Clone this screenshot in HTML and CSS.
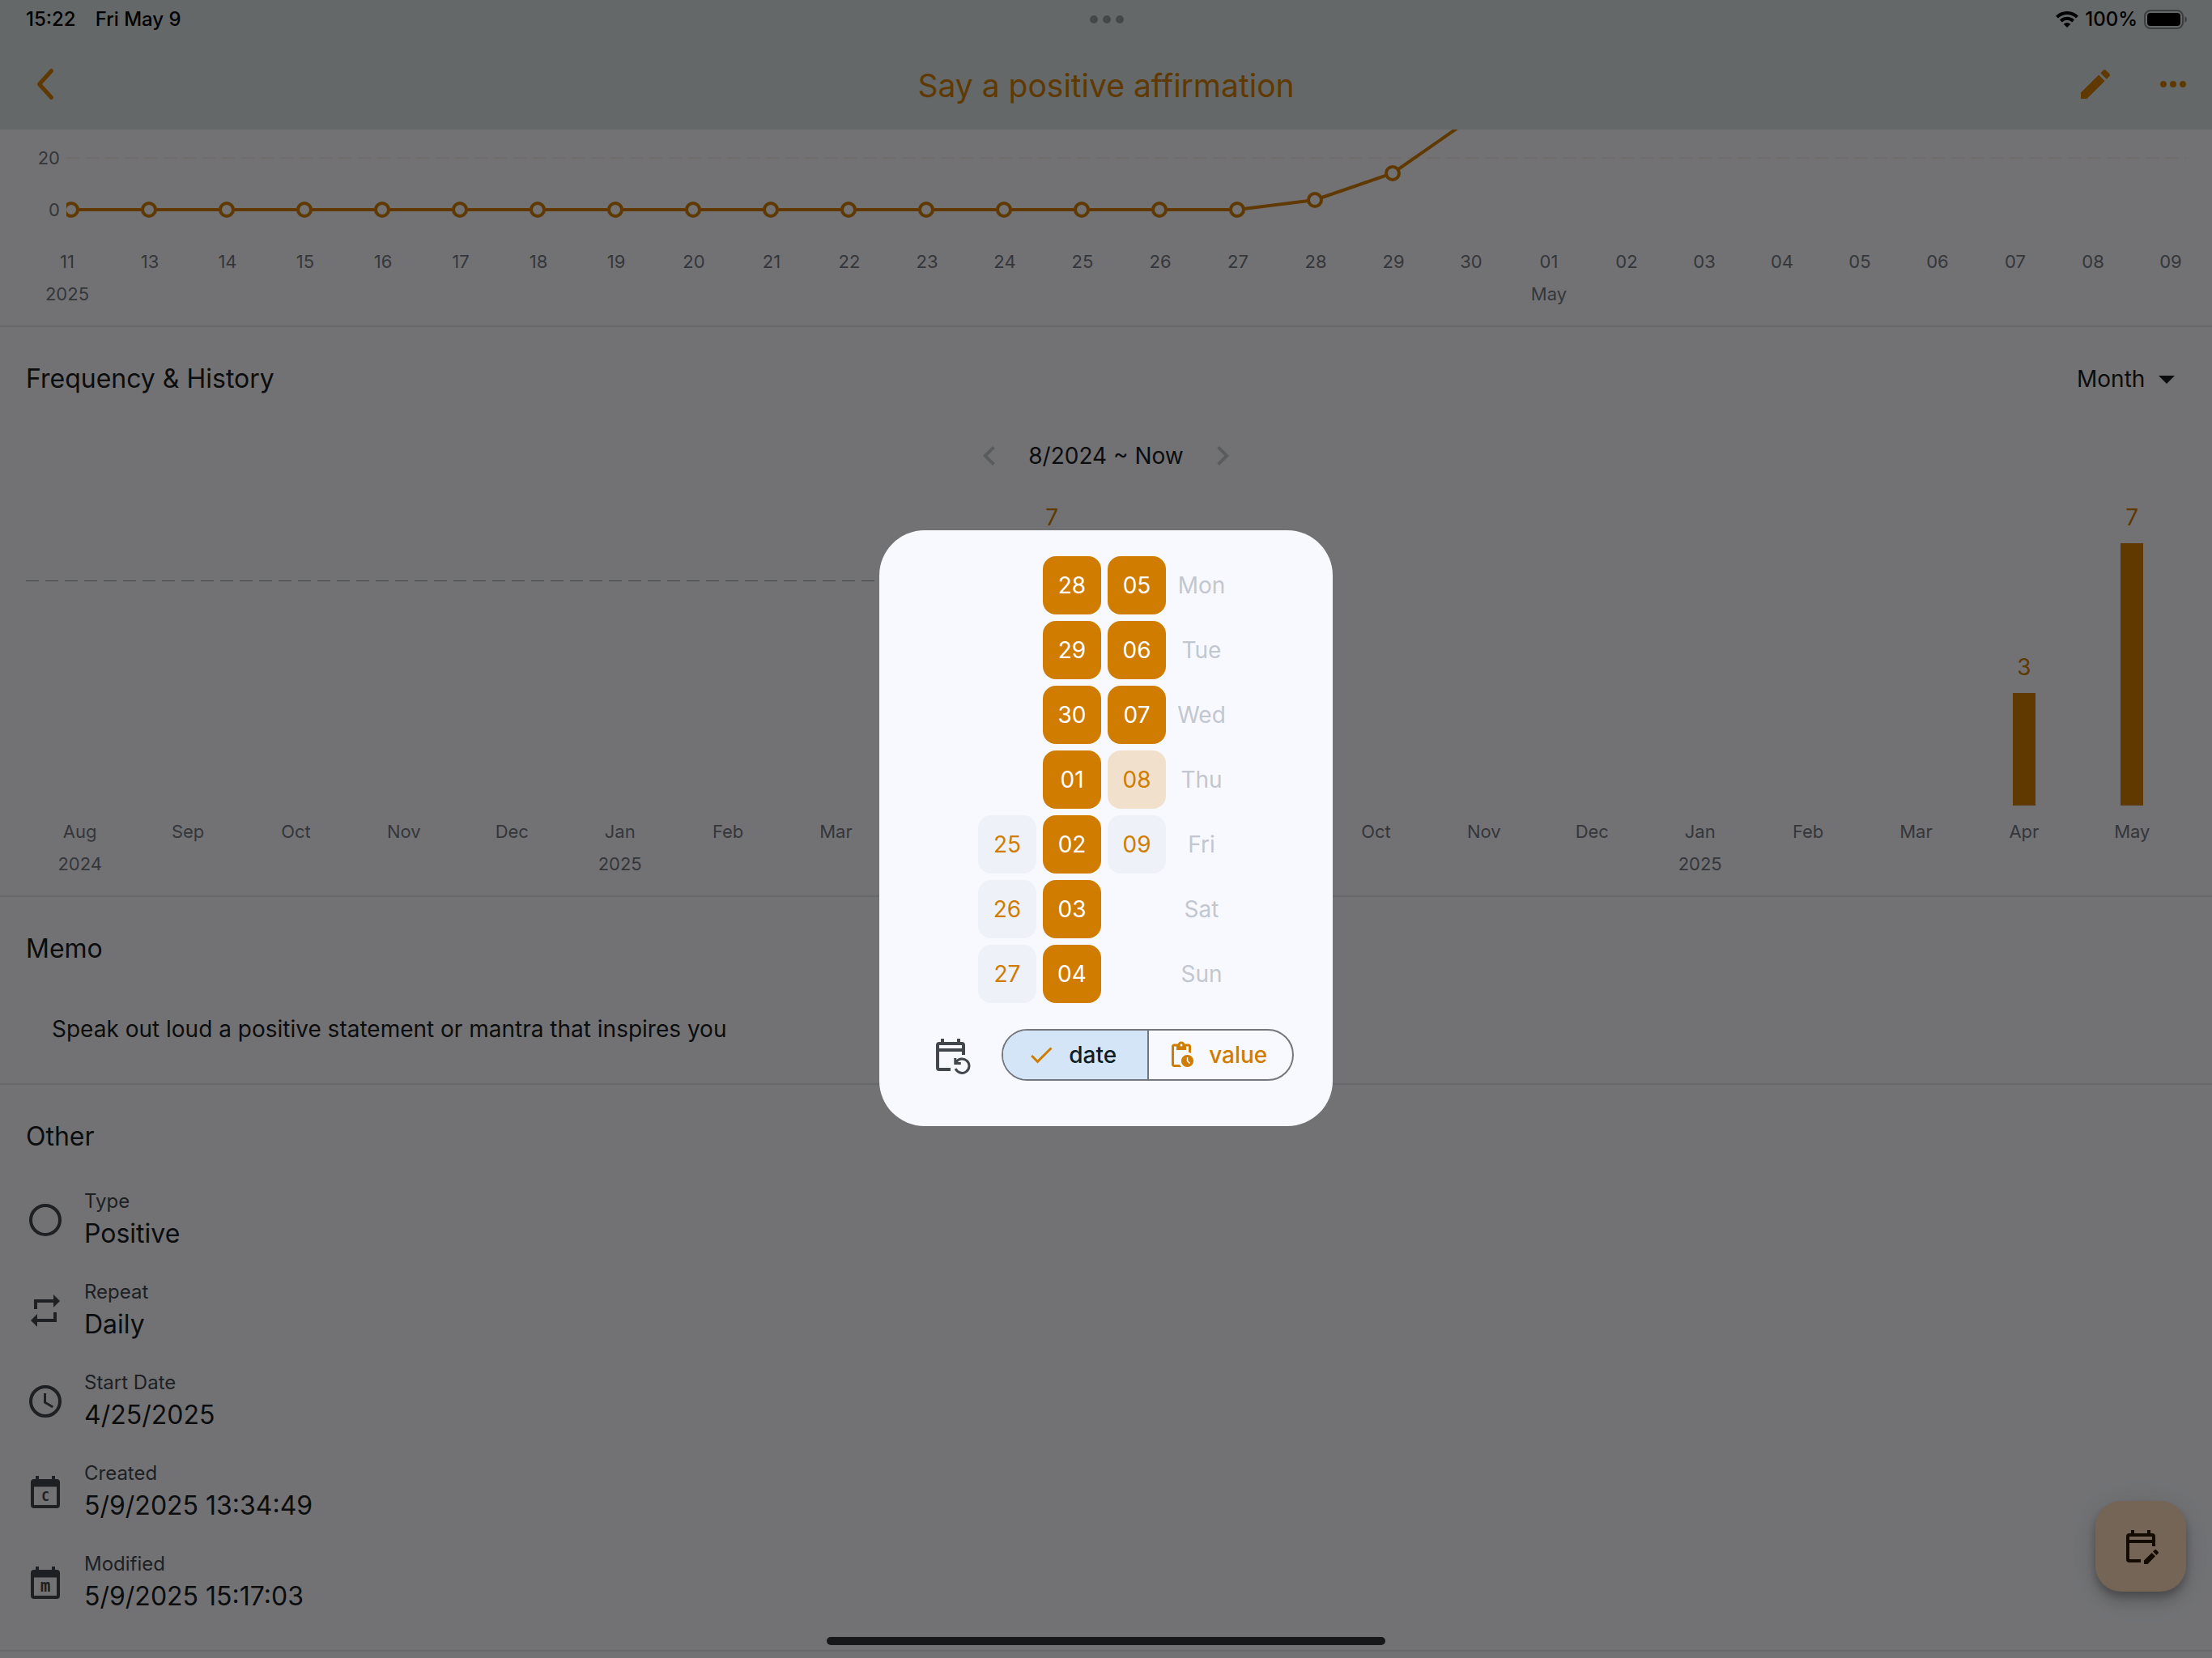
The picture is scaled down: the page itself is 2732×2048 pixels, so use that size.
FILE: index.html
```html
<!DOCTYPE html>
<html lang="en">
<head>
<meta charset="utf-8">
<meta name="viewport" content="width=device-width, initial-scale=1">
<title>Say a positive affirmation</title>
<link rel="stylesheet" href="styles.css">
</head>
<body>
<header class="top">
  <div class="status">
    <div class="status-left"><span>15:22</span><span>Fri May 9</span></div>
    <div class="multitask"><i></i><i></i><i></i></div>
    <div class="status-right">
      <svg width="28" height="20" viewBox="0 0 28 20" aria-hidden="true"><g fill="none" stroke="currentColor" stroke-width="4"><path d="M1.500 7.200A17.600 17.600 0 0 1 26.500 7.200"/><path d="M6.400 12A10.800 10.800 0 0 1 21.600 12"/></g><path d="M14 20l-4.300-4.300a6 6 0 0 1 8.600 0z" fill="currentColor"/></svg>
      <span>100%</span>
      <svg class="battery" width="54" height="24" viewBox="0 0 54 24" aria-hidden="true"><rect x="1" y="1" width="47" height="22" rx="7" fill="none" stroke="#7e8788" stroke-width="2"/><rect x="4" y="4" width="41" height="16" rx="4" fill="#000"/><path d="M50.500 8c3.300 1.500 3.300 6.500 0 8z" fill="#7e8788"/></svg>
    </div>
  </div>
  <div class="toolbar">
    <div class="nav"><button class="icon-btn" aria-label="Back"><svg width="48" height="48" viewBox="0 0 48 48"><path d="M31.500 7.500L16.500 24l15 16.500" fill="none" stroke="currentColor" stroke-width="5" stroke-linecap="round" stroke-linejoin="round"/></svg></button></div>
    <h1>Say a positive affirmation</h1>
    <div class="actions">
      <button class="icon-btn" aria-label="Edit"><svg width="48" height="48" viewBox="0 0 24 24" fill="currentColor"><path d="M3 17.250V21h3.750L17.810 9.940l-3.750-3.750L3 17.250zM20.710 7.040a1 1 0 0 0 0-1.410l-2.340-2.340a1 1 0 0 0-1.410 0l-1.830 1.830 3.750 3.750 1.830-1.830z"/></svg></button>
      <button class="icon-btn" aria-label="More"><svg width="48" height="48" viewBox="0 0 48 48" fill="currentColor"><circle cx="12" cy="24" r="4"/><circle cx="24" cy="24" r="4"/><circle cx="36" cy="24" r="4"/></svg></button>
    </div>
  </div>
</header>

<main>
  <section class="trend">
    <div class="trend-plot">
      <div class="y-axis"><span>20</span><span>0</span></div>
      <svg class="line" viewBox="0 0 2618 124" role="img" aria-label="Score by day">
        <path class="grid-line" d="M0 35H2618"/>
        <path class="score" d="M6 99H1446L1542 87 1638 54 1734 -13"/>
        <g class="dots">
          <circle cx="6" cy="99" r="8"/><circle cx="102" cy="99" r="8"/><circle cx="198" cy="99" r="8"/><circle cx="294" cy="99" r="8"/><circle cx="390" cy="99" r="8"/><circle cx="486" cy="99" r="8"/><circle cx="582" cy="99" r="8"/><circle cx="678" cy="99" r="8"/><circle cx="774" cy="99" r="8"/><circle cx="870" cy="99" r="8"/><circle cx="966" cy="99" r="8"/><circle cx="1062" cy="99" r="8"/><circle cx="1158" cy="99" r="8"/><circle cx="1254" cy="99" r="8"/><circle cx="1350" cy="99" r="8"/><circle cx="1446" cy="99" r="8"/><circle cx="1542" cy="87" r="8"/><circle cx="1638" cy="54" r="8"/>
        </g>
      </svg>
    </div>
    <div class="days">
      <span>11<br>2025</span><span>13</span><span>14</span><span>15</span><span>16</span><span>17</span><span>18</span><span>19</span><span>20</span><span>21</span><span>22</span><span>23</span><span>24</span><span>25</span><span>26</span><span>27</span><span>28</span><span>29</span><span>30</span><span>01<br>May</span><span>02</span><span>03</span><span>04</span><span>05</span><span>06</span><span>07</span><span>08</span><span>09</span>
    </div>
  </section>

  <section class="history">
    <div class="section-head">
      <h2>Frequency &amp; History</h2>
      <div class="period">
        <select aria-label="Period"><option>Month</option><option>Week</option><option>Year</option></select>
        <svg width="48" height="48" viewBox="0 0 24 24" aria-hidden="true"><path d="M7 10l5 5 5-5z" fill="currentColor"/></svg>
      </div>
    </div>
    <div class="pager">
      <button aria-label="Previous"><svg width="48" height="48" viewBox="0 0 24 24" fill="currentColor"><path d="M15.410 7.410L14 6l-6 6 6 6 1.410-1.410L10.830 12z"/></svg></button>
      <span>8/2024 ~ Now</span>
      <button aria-label="Next"><svg width="48" height="48" viewBox="0 0 24 24" fill="currentColor"><path d="M10 6L8.590 7.410 13.170 12l-4.580 4.590L10 18l6-6z"/></svg></button>
    </div>
    <div class="charts">
      <div class="chart with-goal">
        <div class="col"><div class="bar-area"></div><span>Aug<br>2024</span></div>
        <div class="col"><div class="bar-area"></div><span>Sep</span></div>
        <div class="col"><div class="bar-area"></div><span>Oct</span></div>
        <div class="col"><div class="bar-area"></div><span>Nov</span></div>
        <div class="col"><div class="bar-area"></div><span>Dec</span></div>
        <div class="col"><div class="bar-area"></div><span>Jan<br>2025</span></div>
        <div class="col"><div class="bar-area"></div><span>Feb</span></div>
        <div class="col"><div class="bar-area"></div><span>Mar</span></div>
        <div class="col"><div class="bar-area"></div><span></span></div>
        <div class="col"><div class="bar-area"><b>7</b><i class="bar" style="height:324px"></i></div><span></span></div>
      </div>
      <div class="chart">
        <div class="col"><div class="bar-area"></div><span></span></div>
        <div class="col"><div class="bar-area"></div><span></span></div>
        <div class="col"><div class="bar-area"></div><span>Oct</span></div>
        <div class="col"><div class="bar-area"></div><span>Nov</span></div>
        <div class="col"><div class="bar-area"></div><span>Dec</span></div>
        <div class="col"><div class="bar-area"></div><span>Jan<br>2025</span></div>
        <div class="col"><div class="bar-area"></div><span>Feb</span></div>
        <div class="col"><div class="bar-area"></div><span>Mar</span></div>
        <div class="col"><div class="bar-area"><b>3</b><i class="bar" style="height:139px"></i></div><span>Apr</span></div>
        <div class="col"><div class="bar-area"><b>7</b><i class="bar" style="height:324px"></i></div><span>May</span></div>
      </div>
    </div>
  </section>

  <section class="memo">
    <div class="section-head"><h2>Memo</h2></div>
    <p>Speak out loud a positive statement or mantra that inspires you</p>
  </section>

  <section class="other">
    <div class="section-head"><h2>Other</h2></div>
    <ul>
      <li><svg width="48" height="48" viewBox="0 0 48 48"><circle cx="24" cy="24" r="18" fill="none" stroke="currentColor" stroke-width="4"/></svg><div><small>Type</small><strong>Positive</strong></div></li>
      <li><svg width="48" height="48" viewBox="0 0 24 24" fill="currentColor"><path d="M7 7h10v3l4-4-4-4v3H5v6h2V7zm10 10H7v-3l-4 4 4 4v-3h12v-6h-2v4z"/></svg><div><small>Repeat</small><strong>Daily</strong></div></li>
      <li><svg width="48" height="48" viewBox="0 0 48 48"><circle cx="24" cy="24" r="18" fill="none" stroke="currentColor" stroke-width="4"/><path d="M25 14h-3v12l10.500 6.300 1.500-2.460-9-5.340z" fill="currentColor"/></svg><div><small>Start Date</small><strong>4/25/2025</strong></div></li>
      <li><svg width="48" height="48" viewBox="0 0 48 48" fill="currentColor"><path fill-rule="evenodd" d="M12 4h4v4h16V4h4v4h2a4 4 0 0 1 4 4v28a4 4 0 0 1-4 4H10a4 4 0 0 1-4-4V12a4 4 0 0 1 4-4h2zM10 17.500V40h28V17.500z"/><text class="mark mark-c" x="24" y="35" text-anchor="middle">C</text></svg><div><small>Created</small><strong>5/9/2025 13:34:49</strong></div></li>
      <li><svg width="48" height="48" viewBox="0 0 48 48" fill="currentColor"><path fill-rule="evenodd" d="M12 4h4v4h16V4h4v4h2a4 4 0 0 1 4 4v28a4 4 0 0 1-4 4H10a4 4 0 0 1-4-4V12a4 4 0 0 1 4-4h2zM10 17.500V40h28V17.500z"/><text class="mark mark-m" x="24" y="35" text-anchor="middle">m</text></svg><div><small>Modified</small><strong>5/9/2025 15:17:03</strong></div></li>
    </ul>
  </section>
</main>

<button class="fab" aria-label="Edit records"><svg width="48" height="48" viewBox="0 0 48 48" fill="currentColor"><path fill-rule="evenodd" d="M12 4h4v4h16V4h4v4h2a4 4 0 0 1 4 4v12h-4v-4H10v20h14v4H10a4 4 0 0 1-4-4V12a4 4 0 0 1 4-4h2zM10 12v4h28v-4z"/><path d="M28 41.500V46h4.500L42 36.300 37.700 32zM45.500 32.900a1.500 1.500 0 0 0 0-2.100l-2.200-2.200a1.500 1.500 0 0 0-2.200 0L39.100 30.600l4.300 4.300z"/></svg></button>

<div class="scrim">
  <div class="dialog" role="dialog" aria-modal="true" aria-label="Record history">
    <div class="calendar">
      <i></i><button class="day done">28</button><button class="day done">05</button><span>Mon</span>
      <i></i><button class="day done">29</button><button class="day done">06</button><span>Tue</span>
      <i></i><button class="day done">30</button><button class="day done">07</button><span>Wed</span>
      <i></i><button class="day done">01</button><button class="day part">08</button><span>Thu</span>
      <button class="day">25</button><button class="day done">02</button><button class="day">09</button><span>Fri</span>
      <button class="day">26</button><button class="day done">03</button><i></i><span>Sat</span>
      <button class="day">27</button><button class="day done">04</button><i></i><span>Sun</span>
    </div>
    <div class="dialog-foot">
      <button class="reset" aria-label="Back to today"><svg width="50" height="48" viewBox="0 0 50 48" fill="currentColor"><path fill-rule="evenodd" d="M12 4h4v4h16V4h4v4h2a4 4 0 0 1 4 4v12h-4v-4H10v20h14v4H10a4 4 0 0 1-4-4V12a4 4 0 0 1 4-4h2zM10 12v4h28v-4z"/><path d="M30.200 41a8.700 8.700 0 1 0 .6-7.800M29.800 28v6.600h7" fill="none" stroke="currentColor" stroke-width="3"/></svg></button>
      <div class="segments">
        <label class="segment"><input type="radio" name="mode" checked><svg width="36" height="36" viewBox="0 0 24 24" aria-hidden="true"><path d="M9 16.170L4.830 12l-1.420 1.410L9 19 21 7l-1.410-1.410z" fill="currentColor"/></svg><span>date</span></label>
        <label class="segment"><input type="radio" name="mode"><svg width="36" height="36" viewBox="0 0 24 24" aria-hidden="true"><path fill="currentColor" d="M17 12c-2.760 0-5 2.240-5 5s2.240 5 5 5 5-2.240 5-5-2.240-5-5-5zm1.650 7.350L16.500 17.200V14h1v2.790l1.850 1.850-.7.710zM18 3h-3.180C14.400 1.840 13.300 1 12 1s-2.400.840-2.820 2H6c-1.100 0-2 .9-2 2v15c0 1.100.9 2 2 2h6.110c-.590-.570-1.070-1.250-1.420-2H6V5h2v3h8V5h2v5.080c.710.100 1.380.310 2 .600V5c0-1.100-.9-2-2-2zm-6 2c-.55 0-1-.45-1-1s.45-1 1-1 1 .45 1 1-.45 1-1 1z"/></svg><span>value</span></label>
      </div>
    </div>
  </div>
</div>
<div class="home-bar"></div>
</body>
</html>
```
FILE: styles.css
```css
:root {
  --accent: #d07c00;
  --surface: #f8f9ff;
  --ink: #191c20;
  --muted: #42474e;
  --outline: #73777f;
  --divider: #e0e3e4;
}
* { box-sizing: border-box; }
body {
  margin: 0;
  background: var(--surface);
  color: var(--ink);
  font: 400 28px/40px Inter, "Liberation Sans", sans-serif;
}
button { border: 0; padding: 0; background: none; color: inherit; font: inherit; }
svg { display: block; flex: none; }
h1, h2, p, ul { margin: 0; padding: 0; font-weight: 400; }

.top { background: #dae3e5; color: var(--accent); }
.status {
  display: grid;
  grid-template-columns: 1fr auto 1fr;
  align-items: center;
  height: 48px;
  padding: 0 30px 0 32px;
  color: #000;
  font-size: 24px;
  font-weight: 500;
}
.status-left { display: flex; gap: 24px; }
.multitask { display: flex; gap: 6px; }
.multitask i { width: 10px; height: 10px; border-radius: 50%; background: #959ea0; }
.status-right { display: flex; justify-content: flex-end; align-items: center; gap: 8px; }
.toolbar {
  display: grid;
  grid-template-columns: 1fr auto 1fr;
  align-items: center;
  height: 112px;
  padding: 0 24px;
}
.toolbar h1 { padding-top: 3px; font-size: 39px; line-height: 48px; }
.nav { display: flex; padding-left: 8px; }
.icon-btn { width: 48px; height: 48px; }
.actions { display: flex; justify-content: flex-end; gap: 48px; }

section { border-bottom: 2px solid var(--divider); }
.section-head {
  display: flex;
  justify-content: space-between;
  align-items: center;
  padding: 40px 32px 0;
}
h2 { font-size: 32px; line-height: 48px; }

.trend { padding-bottom: 19px; color: var(--outline); font-size: 22px; }
.trend-plot { display: flex; padding-right: 32px; }
.y-axis {
  display: flex;
  flex-direction: column;
  gap: 24px;
  width: 82px;
  padding: 15px 8px 0 0;
  text-align: right;
}
.line { flex: 1; min-width: 0; height: auto; }
.grid-line { stroke: var(--accent); stroke-opacity: .1; stroke-width: 2; stroke-dasharray: 16 8; }
.score { fill: none; stroke: var(--accent); stroke-width: 4; }
.dots circle { fill: var(--surface); stroke: var(--accent); stroke-width: 4; }
.days {
  display: grid;
  grid-template-columns: repeat(28, minmax(0, 1fr));
  padding: 19px 3px 0 41px;
  text-align: center;
}
.days span:first-child { padding-right: 12px; }

.period { position: relative; }
.period select {
  display: block;
  appearance: none;
  border: 0;
  padding: 0 50px 0 0;
  background: none;
  color: inherit;
  font: inherit;
  line-height: 48px;
}
.period svg { position: absolute; right: 0; top: 0; pointer-events: none; }
.pager {
  display: flex;
  justify-content: center;
  align-items: center;
  gap: 24px;
  margin-top: 47px;
}
.pager button { color: #c3c6cc; }
.charts { display: flex; padding: 32px 32px 19px; }
.chart { position: relative; flex: 1; display: grid; grid-template-columns: repeat(10, minmax(0, 1fr)); }
.with-goal::before {
  content: "";
  position: absolute;
  top: 98px;
  left: 0;
  right: 0;
  height: 1px;
  background: repeating-linear-gradient(90deg, #8f989c 0 16px, transparent 16px 24px);
}
.col { text-align: center; color: var(--outline); font-size: 22px; }
.bar-area {
  display: flex;
  flex-direction: column;
  justify-content: flex-end;
  align-items: center;
  gap: 12px;
  height: 376px;
  margin-bottom: 12px;
}
.bar-area b { color: var(--accent); font-size: 28px; font-weight: 400; }
.bar { width: 28px; background: var(--accent); }
.col span { display: block; min-height: 80px; }

.memo p { padding: 55px 64px 47px; }

.other ul { list-style: none; padding: 23px 32px 27px; }
.other li { display: flex; align-items: center; gap: 24px; height: 112px; }
.other li > svg { color: var(--muted); }
.other li > div { padding-bottom: 6px; }
.other small { display: block; color: var(--muted); font-size: 24px; line-height: 40px; }
.other strong { display: block; font-size: 32px; font-weight: 400; line-height: 40px; }
.mark { font-family: "DejaVu Sans Mono", monospace; font-weight: 700; }
.mark-c { font-size: 16px; }
.mark-m { font-size: 21px; }

.fab {
  position: fixed;
  right: 32px;
  bottom: 82px;
  display: grid;
  place-items: center;
  width: 112px;
  height: 112px;
  border-radius: 32px;
  background: #ffdcbb;
  color: #2b1700;
  box-shadow: 0 12px 20px rgba(0, 0, 0, .14), 0 6px 36px rgba(0, 0, 0, .12), 0 6px 10px rgba(0, 0, 0, .2);
}
.scrim {
  position: fixed;
  inset: 0;
  display: grid;
  place-items: center;
  padding-bottom: 2px;
  background: rgba(0, 0, 0, .54);
}
.dialog {
  width: 560px;
  padding: 32px 48px 56px;
  border-radius: 56px;
  background: var(--surface);
}
.calendar {
  display: grid;
  grid-template-columns: repeat(4, 72px);
  grid-auto-rows: 72px;
  gap: 8px;
  justify-content: center;
  padding-right: 4px;
}
.calendar span { align-self: center; text-align: center; color: #c2c7cf; }
.day { border-radius: 16px; background: #eef1f8; color: var(--accent); }
.day.done { background: var(--accent); color: #fff; }
.day.part { background: #f1e0cc; }
.dialog-foot {
  display: flex;
  justify-content: space-between;
  align-items: center;
  padding: 32px 0 0 16px;
}
.reset { color: var(--muted); }
.segments {
  display: flex;
  width: 361px;
  height: 64px;
  border: 2px solid var(--outline);
  border-radius: 32px;
  overflow: hidden;
}
.segment {
  flex: 1;
  display: flex;
  justify-content: center;
  align-items: center;
  gap: 16px;
  padding-right: 8px;
  color: var(--accent);
  font-weight: 500;
}
.segment + .segment { border-left: 2px solid var(--outline); }
.segment input { position: absolute; opacity: 0; pointer-events: none; }
.segment:has(:checked) { background: #d3e5f6; }
.segment:has(:checked) span { color: #0b1d29; }
.home-bar {
  position: fixed;
  bottom: 16px;
  left: 50%;
  width: 690px;
  height: 10px;
  margin-left: -345px;
  border-radius: 5px;
  background: #17181a;
}
```
